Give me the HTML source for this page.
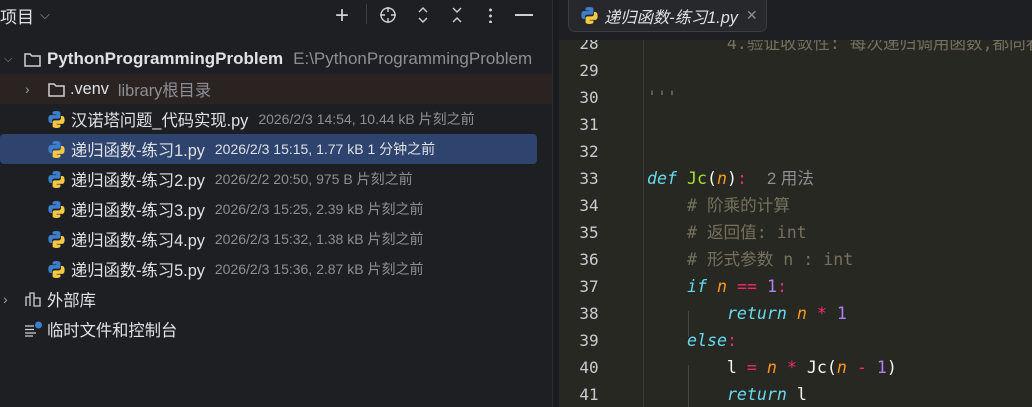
<!DOCTYPE html>
<html><head><meta charset="utf-8"><style>
*{margin:0;padding:0;box-sizing:border-box}
body{width:1032px;height:407px;overflow:hidden;background:#1e1f22;font-family:"Liberation Sans","Noto Sans CJK SC",sans-serif;color:#dfe1e5;position:relative}
.left{position:absolute;left:0;top:0;width:552px;height:407px;background:#1e1f22;overflow:hidden}
.div{position:absolute;left:552px;top:0;width:7px;height:407px;background:#1b1c1f;border-left:1px solid #2b2d30}
.row{position:absolute;left:0;height:30px;width:552px;display:flex;align-items:center;font-size:16.3px;white-space:nowrap}
.meta{color:#8c8f94;font-size:14px;margin-left:10px}
.py{width:19px;height:19px;margin-right:5px}
.ed{position:absolute;left:559px;top:40px;width:473px;height:367px;background:#272822;overflow:hidden}
.in{position:absolute;left:0;top:-4px;width:473px;height:380px}
.tabbar{position:absolute;left:559px;top:0;width:473px;height:40px;background:#1e1f22}
.tab{position:absolute;left:9px;top:0;width:199px;height:32px;border:1px solid #3c3e42;border-top:none;border-radius:0 0 7px 7px;background:#26282c;display:flex;align-items:center;padding-left:11px;font-style:italic;font-size:16.3px;color:#dfe1e5;white-space:nowrap}
.ln{position:absolute;left:0;width:60px;text-align:center;font-family:"DejaVu Sans Mono",monospace;font-size:16px;line-height:27px;height:27px;color:#c8ccd0}
.code{position:absolute;left:88px;font-family:"DejaVu Sans Mono","Noto Sans CJK SC",monospace;font-size:16.6px;line-height:27px;height:27px;white-space:pre;color:#f8f8f2}
.k{color:#66d9ef;font-style:italic}.n{color:#fd971f;font-style:italic}.o{color:#f92672}.d{color:#ae81ff}.c{color:#75715e}.f{color:#a6e22e}
</style></head><body>
<svg width="0" height="0" style="position:absolute"><defs><g id="py"><path d="M8.8 1C5 1 5.3 2.6 5.3 2.6v1.7h3.6v.5H3.8S1.3 4.5 1.3 8.5s2.2 3.8 2.2 3.8h1.3v-1.9s-.1-2.2 2.2-2.2h3.6s2.1 0 2.1-2.1V2.9S13.1 1 8.8 1z" fill="#3d7fcf"/><path d="M9.2 17c3.8 0 3.5-1.6 3.5-1.6v-1.7H9.1v-.5h5.1s2.5.3 2.5-3.7-2.2-3.8-2.2-3.8h-1.3v1.9s.1 2.2-2.2 2.2H7.4s-2.1 0-2.1 2.1v3.2S4.9 17 9.2 17z" fill="#f4c842"/></g></defs></svg>
<div class="left">
<div class="row" style="top:0;height:30px;font-size:17px">项目 <span style="color:#9a9da3;font-size:13px;margin-left:6px">⌵</span></div>
<div style="position:absolute;left:335px;top:2px;font-size:24px;color:#ced0d6;font-weight:300">+</div>
<div style="position:absolute;top:4px;width:1px;height:20px;background:#3c3e42;left:366px"></div>
<svg style="position:absolute;left:379px;top:6px" width="18" height="18"><circle cx="9" cy="9" r="7" fill="none" stroke="#ced0d6" stroke-width="1.4"/><path d="M9 1v5M9 12v5M1 9h5M12 9h5" stroke="#ced0d6" stroke-width="1.4"/></svg>
<svg style="position:absolute;left:416px;top:6px" width="14" height="18"><path d="M3 6l4-4 4 4M3 12l4 4 4-4" fill="none" stroke="#ced0d6" stroke-width="1.4"/></svg>
<svg style="position:absolute;left:450px;top:6px" width="14" height="18"><path d="M3 2l4 4 4-4M3 16l4-4 4 4" fill="none" stroke="#ced0d6" stroke-width="1.4"/></svg>
<div style="position:absolute;left:489px;top:7px;width:3px;height:16px;background:radial-gradient(circle,#ced0d6 1.3px,transparent 1.6px) 0 0/3px 6px"></div>
<div style="position:absolute;left:515px;top:14px;width:18px;height:1.5px;background:#ced0d6"></div>

<div class="row" style="top:44px"><span style="color:#9a9da3;font-size:11px;margin-left:4px;width:19px">⌵</span><svg width="19" height="17" style="margin-right:5px"><path d="M2 3h5l2 2h8v10H2z" fill="none" stroke="#ced0d6" stroke-width="1.5"/></svg><b style="font-size:17px">PythonProgrammingProblem</b><span style="color:#8c8f94;margin-left:10px;font-size:17px">E:\PythonProgrammingProblem</span></div>
<div class="row" style="top:74px;background:#2a2322"><span style="color:#9a9da3;font-size:14px;margin-left:25px;width:22px">›</span><svg width="19" height="17" style="margin-right:4px"><path d="M2 3h5l2 2h8v10H2z" fill="none" stroke="#ced0d6" stroke-width="1.5"/></svg>.venv<span style="color:#8c8f94;margin-left:9px">library根目录</span></div>
<div class="row" style="top:104px;padding-left:47px"><svg class="py" viewBox="0 0 18 18"><use href="#py"/></svg>汉诺塔问题_代码实现.py<span class="meta">2026/2/3 14:54, 10.44 kB 片刻之前</span></div>
<div class="row" style="top:134px;padding-left:47px;width:537px;background:#2e436e;border-radius:4px"><svg class="py" viewBox="0 0 18 18"><use href="#py"/></svg>递归函数-练习1.py<span class="meta" style="color:#dfe1e5">2026/2/3 15:15, 1.77 kB 1 分钟之前</span></div>
<div class="row" style="top:164px;padding-left:47px"><svg class="py" viewBox="0 0 18 18"><use href="#py"/></svg>递归函数-练习2.py<span class="meta">2026/2/2 20:50, 975 B 片刻之前</span></div>
<div class="row" style="top:194px;padding-left:47px"><svg class="py" viewBox="0 0 18 18"><use href="#py"/></svg>递归函数-练习3.py<span class="meta">2026/2/3 15:25, 2.39 kB 片刻之前</span></div>
<div class="row" style="top:224px;padding-left:47px"><svg class="py" viewBox="0 0 18 18"><use href="#py"/></svg>递归函数-练习4.py<span class="meta">2026/2/3 15:32, 1.38 kB 片刻之前</span></div>
<div class="row" style="top:254px;padding-left:47px"><svg class="py" viewBox="0 0 18 18"><use href="#py"/></svg>递归函数-练习5.py<span class="meta">2026/2/3 15:36, 2.87 kB 片刻之前</span></div>
<div class="row" style="top:284px"><span style="color:#9a9da3;font-size:14px;margin-left:3px;width:21px">›</span><svg width="19" height="17" style="margin-right:4px"><path d="M2 15V6h4v9M6 15V2h4v13M10 15V7h6v8z" fill="none" stroke="#ced0d6" stroke-width="1.3"/></svg>外部库</div>
<div class="row" style="top:314px;padding-left:24px"><svg width="19" height="17" style="margin-right:4px"><path d="M1 5h9M1 8.5h9M1 12h11M1 15h8" stroke="#ced0d6" stroke-width="1.3"/><circle cx="14.5" cy="4" r="3.5" fill="#3d7fcf"/></svg>临时文件和控制台</div>
</div>
<div class="div"></div>
<div class="ed">
<div style="position:absolute;left:84px;top:0;width:1px;height:367px;background:#3a3b35"></div>
<div style="position:absolute;left:129px;top:271px;width:1px;height:26px;background:#45463f"></div>
<div style="position:absolute;left:129px;top:325px;width:1px;height:44px;background:#45463f"></div>
<div class="in">
<div class="ln" style="top:-6px">28</div><div class="code c" style="top:-6px">        4.验证收敛性: 每次递归调用函数,都同看基准情</div>
<div class="ln" style="top:21px">29</div>
<div class="ln" style="top:48px">30</div><div class="code c" style="top:48px">'''</div>
<div class="ln" style="top:75px">31</div>
<div class="ln" style="top:102px">32</div>
<div class="ln" style="top:129px">33</div><div class="code" style="top:129px"><span class="k">def</span> <span class="f">Jc</span>(<span class="n">n</span>)<span class="o">:</span>  <span style="color:#8c8f94;font-family:'Liberation Sans','Noto Sans CJK SC',sans-serif">2 用法</span></div>
<div class="ln" style="top:156px">34</div><div class="code c" style="top:156px">    # 阶乘的计算</div>
<div class="ln" style="top:183px">35</div><div class="code c" style="top:183px">    # 返回值: int</div>
<div class="ln" style="top:210px">36</div><div class="code c" style="top:210px">    # 形式参数 n : int</div>
<div class="ln" style="top:237px">37</div><div class="code" style="top:237px">    <span class="k">if</span> <span class="n">n</span> <span class="o">==</span> <span class="d">1</span><span class="o">:</span></div>
<div class="ln" style="top:264px">38</div><div class="code" style="top:264px">        <span class="k">return</span> <span class="n">n</span> <span class="o">*</span> <span class="d">1</span></div>
<div class="ln" style="top:291px">39</div><div class="code" style="top:291px">    <span class="k">else</span><span class="o">:</span></div>
<div class="ln" style="top:318px">40</div><div class="code" style="top:318px">        l <span class="o">=</span> <span class="n">n</span> <span class="o">*</span> Jc(<span class="n">n</span> <span class="o">-</span> <span class="d">1</span>)</div>
<div class="ln" style="top:345px">41</div><div class="code" style="top:345px">        <span class="k">return</span> l</div>
</div>
</div>
<div class="tabbar"><div class="tab"><svg class="py" viewBox="0 0 18 18"><use href="#py"/></svg>递归函数-练习1.py<span style="font-style:normal;color:#8c8f94;margin-left:8px;font-size:14px">✕</span></div></div>
</body></html>
